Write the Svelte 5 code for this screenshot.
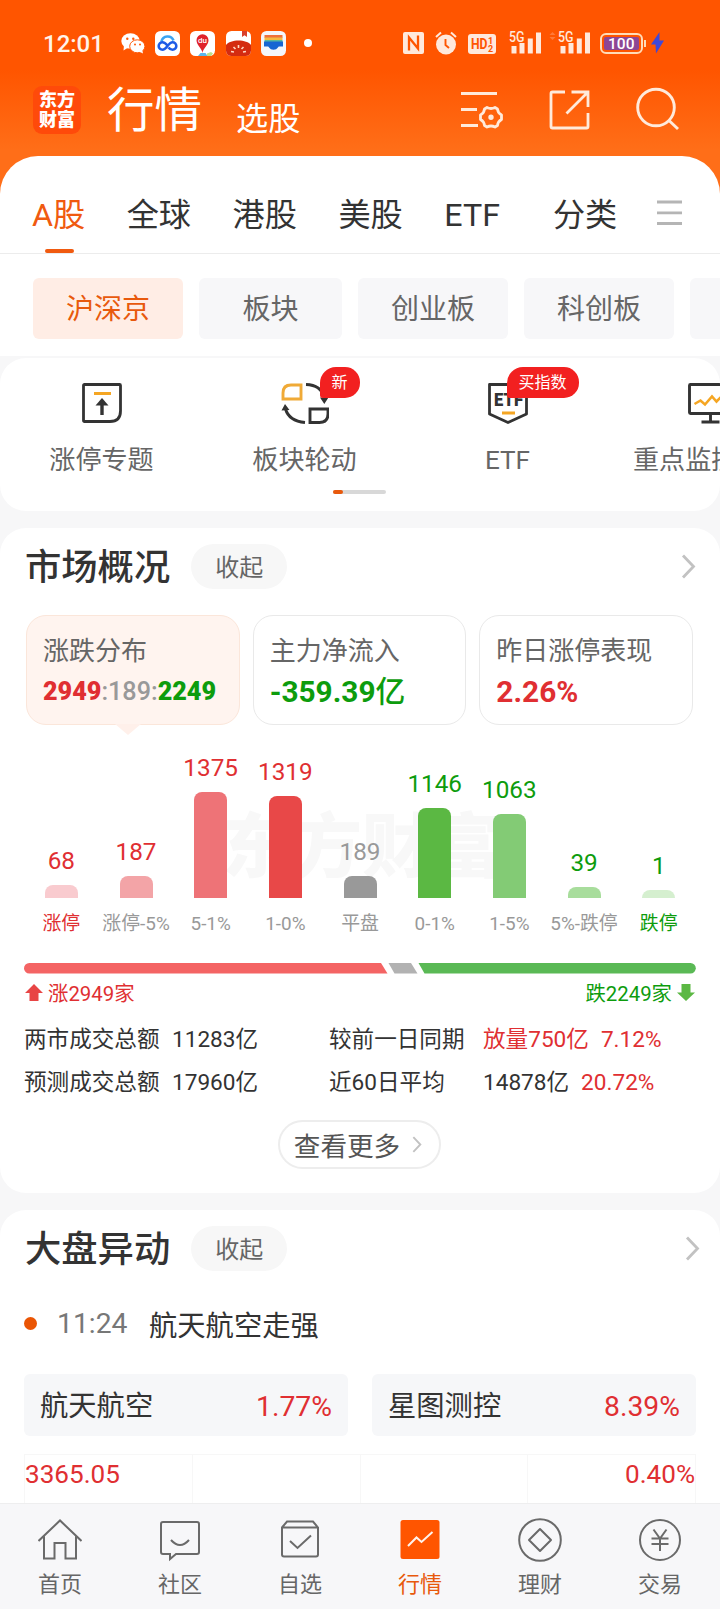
<script lang="ts">
	type Bar = { label: string; value: number; height: number; color: string; tone: string; strong?: boolean };

	const tabs: string[] = ['A股', '全球', '港股', '美股', 'ETF', '分类'];
	const boards: string[] = ['沪深京', '板块', '创业板', '科创板', ''];
	let activeTab = $state('A股');
	let activeBoard = $state('沪深京');
	let activeNav = $state('行情');

	const tools = [
		{ icon: 'limit', label: '涨停专题', badge: '' },
		{ icon: 'rotate', label: '板块轮动', badge: '新' },
		{ icon: 'etf', label: 'ETF', badge: '买指数' },
		{ icon: 'monitor', label: '重点监控', badge: '' }
	];

	// height is the drawn bar height in px
	const bars: Bar[] = [
		{ label: '涨停', value: 68, height: 13, color: '#f9cbcf', tone: 'up', strong: true },
		{ label: '涨停-5%', value: 187, height: 22, color: '#f3a4a7', tone: 'up' },
		{ label: '5-1%', value: 1375, height: 106, color: '#ee7377', tone: 'up' },
		{ label: '1-0%', value: 1319, height: 102, color: '#e84848', tone: 'up' },
		{ label: '平盘', value: 189, height: 22, color: '#999999', tone: 'flat' },
		{ label: '0-1%', value: 1146, height: 90, color: '#5bb843', tone: 'down' },
		{ label: '1-5%', value: 1063, height: 84, color: '#83cb75', tone: 'down' },
		{ label: '5%-跌停', value: 39, height: 11, color: '#a8dd9c', tone: 'down' },
		{ label: '跌停', value: 1, height: 8, color: '#d5efcf', tone: 'down', strong: true }
	];

	const movers = [
		{ name: '航天航空', change: '1.77%' },
		{ name: '星图测控', change: '8.39%' }
	];

	const navItems: string[] = ['首页', '社区', '自选', '行情', '理财', '交易'];
</script>

{#snippet chevron(w: number, h: number)}
	<svg class="chevron" width={w} height={h} viewBox="0 0 15 25">
		<path d="M2 1.500 L12.500 12.500 L2 23.500" fill="none" stroke="#c2c2c2" stroke-width="2.800" />
	</svg>
{/snippet}

{#snippet signal()}
	<svg width="32" height="24" viewBox="0 0 32 24">
		<text x="0" y="10.500" font-size="14" font-weight="500" fill="#ffe9dc" textLength="15.500" lengthAdjust="spacingAndGlyphs">5G</text>
		<path d="M2.500 15h5v7.500h-5zM10.500 12h5v10.500h-5zM18.800 7.500h5v15h-5zM27 1.500h5v21h-5z" fill="#ffe9dc" />
	</svg>
{/snippet}

<div class="page">
	<div class="top">
		<div class="status">
			<span class="time">12:01</span>
			<svg class="wechat" width="24" height="21" viewBox="0 0 24 21">
				<ellipse cx="9.500" cy="8" rx="9.200" ry="7.700" fill="#fff" />
				<path d="M3 12 L2.500 17.500 L8 14z" fill="#fff" />
				<ellipse cx="16.300" cy="13.300" rx="7.600" ry="6.500" fill="#fff" stroke="#ff5a08" stroke-width="1" />
				<path d="M18 18.500 L22 20.500 L21 16z" fill="#fff" />
				<g fill="#ff5a08">
					<circle cx="6.300" cy="5.800" r="1.200" /><circle cx="12.300" cy="5.800" r="1.200" />
					<circle cx="14" cy="11.500" r="1" /><circle cx="19" cy="11.500" r="1" />
				</g>
			</svg>
			<svg class="app-icon" width="25" height="25" viewBox="0 0 25 25">
				<rect width="25" height="25" rx="5.500" fill="#fff" />
				<path d="M6.500 10.500a6.300 6.300 0 0 1 12-1" fill="none" stroke="#3ba4f2" stroke-width="2.600" />
				<path d="M12.500 14.500c-2-2.500-3.500-3.300-5-3.300a3.800 3.800 0 0 0 0 7.600c4 0 6-7.600 10-7.600a3.800 3.800 0 0 1 0 7.600c-1.500 0-3-1-4-2.300" fill="none" stroke="#1e5be6" stroke-width="2.600" />
			</svg>
			<svg class="app-icon" width="25" height="25" viewBox="0 0 25 25">
				<rect width="25" height="25" rx="5.500" fill="#fff" />
				<path d="M8 25l2.500-3h5l2 3z" fill="#5bb7ea" />
				<path d="M17 22.500l4-1.500 2 1.500-2 2.500h-4z" fill="#bfe08a" />
				<path d="M12.500 22c-.5-5-6-7.500-6-12.800a6 6 0 0 1 12 0c0 5.300-5.500 7.800-6 12.800z" fill="#e0222b" />
				<text x="12.500" y="12" font-size="8" font-weight="500" fill="#fff" text-anchor="middle">du</text>
			</svg>
			<svg class="app-icon" width="25" height="25" viewBox="0 0 25 25">
				<rect y="0" width="25" height="25" rx="5.500" fill="#fff" />
				<path d="M16 0h5v6l-2.500-1.800L16 6z" fill="#d9402c" />
				<path d="M0 14C4 8 21 8 25 14v5.500a5.500 5.500 0 0 1-5.500 5.500h-14A5.500 5.500 0 0 1 0 19.500z" fill="#d42b10" />
				<path d="M5 20.500l3 .5M7.500 16l2 2M12.500 14v3M17.500 16l-2 2M20 20.500l-3 .5" stroke="#ffd9c4" stroke-width="1.600" />
			</svg>
			<svg class="app-icon" width="25" height="25" viewBox="0 0 25 25">
				<rect width="25" height="25" rx="5.500" fill="#f4f6fb" />
				<path d="M3.500 4h18v3h-18z" fill="#f0703a" />
				<path d="M3.500 6.500h18V9h-18z" fill="#f4b942" />
				<path d="M3.500 9h18v2h-18z" fill="#56b7a0" />
				<path d="M3 10.500h19v5h-3.500c-.8 0-1.300.5-1.800 1.300-.9 1.300-2 1.900-4.200 1.900s-3.300-.6-4.200-1.900c-.5-.8-1-1.300-1.800-1.300H3z" fill="#1765d2" />
			</svg>
			<span class="dot"></span>

			<svg class="nfc" width="21" height="22" viewBox="0 0 21 22">
				<path d="M2 0h17q2 0 2 2v18q0 2-2 2H2q-2 0-2-2V2q0-2 2-2z" fill="#ffe9dc" />
				<path d="M6 18.500V5.500l9 11V3.500" fill="none" stroke="#ff5500" stroke-width="2.300" />
			</svg>
			<svg class="alarm" width="22" height="24" viewBox="0 0 22 24">
				<circle cx="11" cy="13.500" r="10" fill="#ffe9dc" />
				<path d="M1 6l5-4.500M21 6l-5-4.500" stroke="#ffe9dc" stroke-width="2" />
				<path d="M10.500 8v6l3.500 3" fill="none" stroke="#ff5500" stroke-width="1.900" />
			</svg>
			<svg class="hd" width="28" height="20" viewBox="0 0 28 20">
				<rect width="28" height="20" rx="3" fill="#ffe9dc" />
				<text x="3" y="15" font-size="14.500" font-weight="700" fill="#ff5500" textLength="16.500" lengthAdjust="spacingAndGlyphs">HD</text>
				<text x="20" y="9.500" font-size="9" font-weight="700" fill="#ff5500">1</text>
				<text x="20" y="18" font-size="9" font-weight="700" fill="#ff5500">2</text>
			</svg>
			<span class="sig1">{@render signal()}</span>
			<svg class="updown" width="7" height="10" viewBox="0 0 7 10">
				<path d="M.5 4L3.500 1l3 3zM.5 6l3 3 3-3z" fill="#ff7a3a" />
			</svg>
			<span class="sig2">{@render signal()}</span>
			<span class="battery"><span>100</span></span>
			<svg class="bolt" width="15" height="22" viewBox="0 0 15 22">
				<path d="M9.500 0L1 12.500h4.500L6 21.500 14 8.500H9.500z" fill="#3f48d8" />
			</svg>
		</div>

		<header class="appbar">
			<div class="logo"><span>东方</span><span>财富</span></div>
			<span class="title">行情</span>
			<span class="subtitle">选股</span>
			<svg class="filter" width="44" height="44" viewBox="0 0 44 44" fill="none" stroke="#ffeadb" stroke-width="2.800">
				<path d="M1 6.500h36M1 22.500h16M1 38.500h17" />
				<path d="M27 20.500q4 2 8 0l2.500 1.500q.3 4 4 6v4.500q-3.700 2-4 6L35 40q-4-2-8 0l-2.500-1.500q-.3-4-4-6V28q3.700-2 4-6z" stroke-linejoin="round" />
				<circle cx="31" cy="30.300" r="1.300" />
			</svg>
			<svg class="share" width="42" height="42" viewBox="0 0 42 42" fill="none" stroke="#ffeadb" stroke-width="2.800">
				<path d="M16 3H3.500Q2 3 2 4.500V37.500Q2 39 3.500 39H37.500Q39 39 39 37.500V24M22.500 3H39V18M38.500 3.500L17.500 24.500" />
			</svg>
			<svg class="search" width="44" height="44" viewBox="0 0 44 44" fill="none" stroke="#ffeadb" stroke-width="2.900">
				<circle cx="20" cy="20.500" r="18.300" />
				<path d="M33 33.500L42 42" />
			</svg>
		</header>

		<div class="panel">
			<nav class="tabs">
				{#each tabs as tab (tab)}
					<button class="tab" class:active={activeTab === tab} onclick={() => (activeTab = tab)}>{tab}</button>
				{/each}
				<svg class="menu" width="25" height="26" viewBox="0 0 25 26">
					<path d="M0 2h25M0 12.800h25M0 23.500h25" stroke="#b5b5b5" stroke-width="2.800" />
				</svg>
			</nav>
			<div class="boards">
				{#each boards as board}
					<button class="board" class:active={activeBoard === board} class:short={board.length < 3} onclick={() => (activeBoard = board)}>{board}</button>
				{/each}
			</div>
		</div>
	</div>

	<section class="card tools">
		<div class="tool-row">
			{#each tools as tool}
				<div class="tool">
					<div class="tool-icon">
						{#if tool.icon === 'limit'}
							<svg width="40" height="40" viewBox="0 0 40 40" fill="none" stroke="#333" stroke-width="2.800">
								<path d="M2.500 1.500H37.500Q38.500 1.500 38.500 2.500V28Q38.500 38.500 28 38.500H2.500Q1.500 38.500 1.500 37.500V2.500Q1.500 1.500 2.500 1.500z" />
								<path d="M12 10.500h17" stroke="#f5a623" />
								<path d="M20 32V20" stroke-width="3.400" />
								<path d="M13.500 22.500L20 15l6.500 7.500z" fill="#333" stroke="none" />
							</svg>
						{:else if tool.icon === 'rotate'}
							<svg width="48" height="42" viewBox="0 0 48 42" fill="none" stroke="#333" stroke-width="2.900">
								<path d="M2 16V10Q2 2 10 2H20V16z" stroke="#f0aa37" />
								<path d="M29 26H47V31Q47 39.500 38.500 39.500H29z" />
								<path d="M25 1.500Q40 2 43 14M24 39.500Q8 38 4.500 26" />
								<path d="M.5 27.500L4 21l4.500 6zM39 14.500h8.500l-4.200 6.500z" fill="#333" stroke="none" />
							</svg>
						{:else if tool.icon === 'etf'}
							<svg width="40" height="42" viewBox="0 0 40 42" fill="none" stroke="#333" stroke-width="2.800">
								<path d="M1.500 1.500H38.500V31L20 39.500 1.500 31z" stroke-linejoin="round" />
								<text x="6" y="23" font-size="18" font-weight="900" fill="#333" stroke="none" textLength="29" lengthAdjust="spacingAndGlyphs">ETF</text>
								<path d="M14 30h13" stroke="#f5a623" />
							</svg>
						{:else}
							<svg width="46" height="41" viewBox="0 0 46 41" fill="none" stroke="#333" stroke-width="2.900">
								<path d="M2.500 1.500H43.500V30.500H2.500Q1.500 30.500 1.500 29.500V2.500Q1.500 1.500 2.500 1.500z" />
								<path d="M22.500 30v9M13.500 39h18" />
								<path d="M6.500 21l6-3.500 4.500 4 7-8 4.500 5 6-6 4 2" stroke="#f5a623" stroke-width="2.600" />
							</svg>
						{/if}
						{#if tool.badge}
							<span class="badge {tool.icon}">{tool.badge}</span>
						{/if}
					</div>
					<span class="tool-label" class:cut={tool.icon === 'monitor'}>{tool.label}</span>
				</div>
			{/each}
		</div>
		<div class="pager"><span></span></div>
	</section>

	<section class="card overview">
		<div class="head">
			<h2>市场概况</h2>
			<span class="fold">收起</span>
			{@render chevron(15, 25)}
		</div>

		<div class="stats">
			<div class="stat selected">
				<span class="stat-label">涨跌分布</span>
				<span class="stat-value small"><b class="red">2949</b><i>:189:</i><b class="green">2249</b></span>
			</div>
			<div class="stat">
				<span class="stat-label">主力净流入</span>
				<span class="stat-value green">-359.39<em>亿</em></span>
			</div>
			<div class="stat">
				<span class="stat-label">昨日涨停表现</span>
				<span class="stat-value red">2.26%</span>
			</div>
		</div>

		<div class="chart">
			<span class="watermark">东方财富</span>
			{#each bars as bar}
				<div class="col {bar.tone}">
					<span class="num">{bar.value}</span>
					<div class="bar" style="height: {bar.height}px; background: {bar.color}"></div>
					<span class="range" class:strong={bar.strong}>{bar.label}</span>
				</div>
			{/each}
		</div>

		<svg class="ratio" width="672" height="11" viewBox="0 0 672 11">
			<path d="M5.300 0H357L363.500 10.600H5.300A5.300 5.300 0 0 1 5.300 0z" fill="#f46464" />
			<path d="M364.500 0H387L393.500 10.600H370.500z" fill="#b2b2b2" />
			<path d="M394.500 0H666.500A5.300 5.300 0 0 1 666.500 10.600H400.500z" fill="#5ab955" />
		</svg>
		<div class="legend">
			<svg width="18" height="17" viewBox="0 0 18 17"><path d="M9 0L18 9H13.500V17H4.500V9H0z" fill="#e84545" /></svg>
			<span class="red">涨2949家</span>
			<span class="green right">跌2249家</span>
			<svg width="18" height="17" viewBox="0 0 18 17"><path d="M9 17L18 8.500H13.500V0H4.500V8.500H0z" fill="#5bb843" /></svg>
		</div>

		<div class="totals">
			<div class="total-row">
				<span class="c1">两市成交总额</span><span class="c2">11283亿</span>
				<span class="c3">较前一日同期</span><span class="red">放量750亿</span><span class="red pct">7.12%</span>
			</div>
			<div class="total-row">
				<span class="c1">预测成交总额</span><span class="c2">17960亿</span>
				<span class="c3">近60日平均</span><span>14878亿</span><span class="red pct">20.72%</span>
			</div>
		</div>

		<button class="more">查看更多 {@render chevron(10, 17)}</button>
	</section>

	<section class="card moves">
		<div class="head">
			<h2>大盘异动</h2>
			<span class="fold">收起</span>
			{@render chevron(15, 25)}
		</div>
		<div class="event">
			<span class="event-dot"></span>
			<span class="event-time">11:24</span>
			<span>航天航空走强</span>
		</div>
		<div class="movers">
			{#each movers as mover}
				<div class="mover"><span>{mover.name}</span><span class="red">{mover.change}</span></div>
			{/each}
		</div>
		<div class="grid">
			<div class="cell"><span class="red">3365.05</span></div>
			<div class="cell"></div>
			<div class="cell"></div>
			<div class="cell last"><span class="red">0.40%</span></div>
		</div>
	</section>

	<nav class="bottom">
		{#each navItems as item (item)}
			<button class="nav-item" class:active={activeNav === item} onclick={() => (activeNav = item)}>
				<svg width="44" height="44" viewBox="0 0 44 44" fill="none" stroke="#6a6a6a" stroke-width="2">
					{#if item === '首页'}
						<path d="M.5 23L22 2.500 43.500 23M6 18.500V40.500H16.500V25H27.500V40.500H38V18.500" />
					{:else if item === '社区'}
						<path d="M5 4H39Q41 4 41 6V34Q41 36 39 36H18L12 41V36H5Q3 36 3 34V6Q3 4 5 4z" />
						<path d="M13 22Q22 32 31 22" />
					{:else if item === '自选'}
						<path d="M4 9.500L9 3.500H35L40 9.500V36.500Q40 38.500 38 38.500H6Q4 38.500 4 36.500zM4 9.500H40" />
						<path d="M12 23l7.500 7L33 17.500" />
					{:else if item === '行情'}
						<rect x="2.500" y="2" width="39" height="39" rx="2.500" fill="#ff5500" stroke="none" />
						<path d="M10 28l8.500-8.500 5 4.500L34.500 14" stroke="#fff3ec" />
					{:else if item === '理财'}
						<circle cx="22" cy="22" r="20.800" />
						<path d="M22 11L33 22 22 33 11 22z" stroke-linejoin="round" />
					{:else}
						<circle cx="22" cy="22" r="20" />
						<path d="M15.500 11.500L22 20.500 28.500 11.500M13.500 20.500H30.500M13.500 26H30.500M22 20.500V33" />
					{/if}
				</svg>
				<span>{item}</span>
			</button>
		{/each}
	</nav>
</div>

<style>
	:global(body) {
		margin: 0;
	}

	.page {
		width: 720px;
		height: 1609px;
		overflow: hidden;
		display: flex;
		flex-direction: column;
		background: #f7f7f8;
		font-family: Roboto, 'Noto Sans CJK SC', sans-serif;
		color: #333;
	}

	.page * {
		box-sizing: border-box;
	}

	svg {
		display: block;
		flex: none;
	}

	button {
		border: none;
		background: none;
		padding: 0;
		font: inherit;
		color: inherit;
		white-space: nowrap;
	}

	span {
		white-space: nowrap;
	}

	.red {
		color: #e02f32;
	}

	.green {
		color: #0d9c0d;
	}

	/* orange header */
	.top {
		background: linear-gradient(#ff5500 0, #ff5500 70px, #ff6e18 150px, #ff6e18 100%);
		flex: none;
	}

	.status {
		display: flex;
		align-items: center;
		height: 86px;
		padding-left: 43px;
	}

	.time {
		width: 78px;
		padding-top: 1px;
		font-size: 24px;
		font-weight: 500;
		line-height: 28px;
		color: #fff3ea;
	}

	.app-icon {
		margin-left: 10.200px;
	}

	.dot {
		width: 8px;
		height: 8px;
		margin-left: 18px;
		border-radius: 50%;
		background: #fff;
	}

	.nfc {
		margin-left: 91px;
	}

	.alarm {
		margin-left: 11px;
	}

	.hd {
		margin: 2px 0 0 11px;
	}

	.sig1 {
		margin-left: 13px;
	}

	.updown {
		margin: -14px 0 0 8px;
	}

	.sig2 {
		margin-left: 2px;
	}

	.battery {
		position: relative;
		display: flex;
		width: 43px;
		height: 21px;
		margin-left: 10px;
		padding: 2px;
		border: 2px solid #ffdcb8;
		border-radius: 6px;
	}

	.battery::after {
		content: '';
		position: absolute;
		top: 5px;
		right: -5px;
		width: 2px;
		height: 7px;
		background: #ffdcb8;
	}

	.battery span {
		flex: 1;
		border-radius: 2px;
		background: #8d4694;
		color: #fff;
		font-size: 15.500px;
		font-weight: 500;
		line-height: 14px;
		text-align: center;
	}

	.bolt {
		margin-left: 7px;
	}

	.appbar {
		display: flex;
		align-items: flex-start;
		height: 70px;
		padding-left: 33px;
		color: #fff;
	}

	.logo {
		display: flex;
		flex-direction: column;
		justify-content: center;
		width: 48px;
		height: 48px;
		border-radius: 9px;
		background: #ff4a0a;
		font-size: 18px;
		font-weight: 900;
		line-height: 20px;
		text-align: center;
	}

	.title {
		margin: -3px 0 0 26px;
		font-size: 47.500px;
		line-height: 56px;
	}

	.subtitle {
		margin: 13px 0 0 34px;
		font-size: 32.200px;
		line-height: 40px;
	}

	.filter {
		margin: 1px 0 0 160px;
	}

	.share {
		margin: 3px 0 0 45px;
	}

	.search {
		margin: 1px 0 0 45px;
	}

	.panel {
		height: 200px;
		border-radius: 38px 38px 0 0;
		background: #fff;
		overflow: hidden;
	}

	.tabs {
		display: flex;
		align-items: center;
		height: 98px;
		padding: 20px 0 0 32px;
		border-bottom: 1px solid #ececec;
	}

	.tab {
		position: relative;
		margin-right: 41.500px;
		font-size: 32.200px;
		line-height: 40px;
	}

	.tab:nth-child(5) {
		margin-right: 53px;
	}

	.tab:nth-child(6) {
		margin-right: 40px;
	}

	.tab.active {
		color: #f05a10;
	}

	.tab.active::after {
		content: '';
		position: absolute;
		left: 13px;
		bottom: -18px;
		width: 29px;
		height: 4px;
		border-radius: 2px;
		background: #f05a10;
	}

	.menu {
		margin-top: -3px;
	}

	.boards {
		display: flex;
		gap: 16px;
		padding: 24px 0 0 33px;
	}

	.board {
		flex: none;
		width: 150px;
		height: 61px;
		padding-top: 2px;
		border-radius: 6px;
		background: #f7f7f9;
		color: #666;
		font-size: 28px;
		line-height: 59px;
	}

	.board.short {
		width: 143px;
	}

	.board.active {
		background: #ffede5;
		color: #e8590c;
	}

	/* cards */
	.card {
		flex: none;
		border-radius: 26px;
		background: #fff;
	}

	.tools {
		height: 153px;
		margin-top: 2px;
		overflow: hidden;
	}

	.tool-row {
		display: flex;
		width: 814px;
		padding-top: 25px;
	}

	.tool {
		display: flex;
		flex-direction: column;
		align-items: center;
		width: 203px;
	}

	.tool-icon {
		position: relative;
		height: 59px;
	}

	.badge {
		position: absolute;
		left: 19px;
		top: -16px;
		height: 31px;
		padding: 0 12px;
		border-radius: 16px 15px 15px 3px;
		background: #f22020;
		color: #fff;
		font-size: 16px;
		line-height: 32px;
	}

	.badge.rotate {
		left: 39px;
	}

	.tool-label {
		color: #666;
		font-size: 26.100px;
		line-height: 36px;
	}

	.tool-label.cut {
		width: 155px;
	}

	.pager {
		width: 53px;
		height: 4px;
		margin: 12px 0 0 333px;
		border-radius: 2px;
		background: #d8d8d8;
	}

	.pager span {
		display: block;
		width: 10px;
		height: 4px;
		border-radius: 2px;
		background: #e8590c;
	}

	.overview {
		display: flex;
		flex-direction: column;
		height: 665px;
		margin-top: 17px;
		padding: 0 24px;
	}

	.head {
		display: flex;
		align-items: center;
		height: 77px;
	}

	h2 {
		margin: 3px 0 0 1px;
		font-size: 36.300px;
		font-weight: 500;
		line-height: 44px;
		white-space: nowrap;
	}

	.fold {
		margin-left: 21px;
		width: 96px;
		height: 45px;
		padding-top: 1px;
		border-radius: 23px;
		background: #f7f7f7;
		color: #666;
		font-size: 24px;
		line-height: 46px;
		text-align: center;
	}

	.head .chevron {
		margin-left: auto;
	}

	.stats {
		display: flex;
		gap: 13px;
		padding: 10px 3px 0 2px;
	}

	.stat {
		position: relative;
		display: flex;
		flex-direction: column;
		flex: 1;
		height: 110px;
		padding: 17px 0 0 16px;
		border: 1.500px solid #e9e9e9;
		border-radius: 20px;
	}

	.stat.selected {
		border-color: #fbe6da;
		background: #fff4ef;
	}

	.stat.selected::after {
		content: '';
		position: absolute;
		left: 88px;
		bottom: -11px;
		border: 13px solid transparent;
		border-top: 11px solid #fff0ea;
		border-bottom: none;
	}

	.stat-label {
		color: #666;
		font-size: 26px;
		line-height: 36px;
	}

	.stat-value {
		font-size: 29.800px;
		font-weight: 700;
		line-height: 46px;
	}

	.stat-value em {
		font-style: normal;
		font-weight: 500;
	}

	.stat-value.small {
		font-size: 25.200px;
	}

	.stat-value i {
		color: #999;
		font-style: normal;
		font-weight: 500;
	}

	.chart {
		position: relative;
		display: flex;
		align-items: flex-end;
		height: 214px;
	}

	.watermark {
		position: absolute;
		left: 198px;
		top: 78px;
		color: #f8f8f8;
		font-size: 70px;
		font-weight: 900;
		line-height: 90px;
	}

	.col {
		position: relative;
		display: flex;
		flex: 1;
		flex-direction: column;
		align-items: center;
	}

	.num {
		margin-bottom: 9px;
		font-size: 24.300px;
		line-height: 30px;
	}

	.bar {
		width: 33px;
		border-radius: 8px 8px 0 0;
	}

	.range {
		height: 30px;
		margin: 11px 0 0;
		color: #999;
		font-size: 18.900px;
		line-height: 30px;
	}

	.up .num,
	.up .strong {
		color: #e02f32;
	}

	.flat .num {
		color: #999;
	}

	.down .num,
	.down .strong {
		color: #0d9c0d;
	}

	.ratio {
		margin-top: 24px;
	}

	.legend {
		display: flex;
		align-items: center;
		height: 36px;
		padding: 0 1px;
		font-size: 20.400px;
		gap: 5px;
	}

	.right {
		margin-left: auto;
	}

	.totals {
		margin-top: 8px;
	}

	.total-row {
		display: flex;
		height: 43px;
		font-size: 22.600px;
		line-height: 43px;
	}

	.c1 {
		width: 148px;
	}

	.c2 {
		width: 157px;
	}

	.c3 {
		width: 154px;
	}

	.pct {
		margin-left: 12px;
	}

	.more {
		display: flex;
		align-items: center;
		align-self: center;
		justify-content: center;
		gap: 12px;
		width: 163px;
		height: 49px;
		margin-top: 16px;
		margin-right: 1px;
		padding-right: 3px;
		border: 2px solid #ededed;
		border-radius: 25px;
		color: #555;
		font-size: 26.600px;
	}

	.moves {
		height: 320px;
		margin-top: 17px;
		padding: 0 24px;
		border-radius: 26px 26px 0 0;
	}

	.moves .head {
		margin-right: -4px;
	}

	.event {
		display: flex;
		align-items: center;
		height: 72px;
		font-size: 28.300px;
	}

	.event-dot {
		width: 13px;
		height: 13px;
		margin-right: 20px;
		border-radius: 50%;
		background: #ea5504;
	}

	.event-time {
		width: 92px;
		color: #777;
	}

	.movers {
		display: flex;
		gap: 24px;
		margin-top: 15px;
	}

	.mover {
		display: flex;
		flex: 1;
		justify-content: space-between;
		height: 62px;
		padding: 2px 16px 0;
		border-radius: 6px;
		background: #f6f7f9;
		font-size: 28.300px;
		line-height: 62px;
	}

	.grid {
		display: flex;
		height: 60px;
		margin-top: 18px;
		border: 1px solid #f7f7f7;
		border-width: 1px 0 0 1px;
	}

	.cell {
		flex: 1;
		border-right: 1px solid #f7f7f7;
		font-size: 26.100px;
		line-height: 39px;
	}

	.cell.last {
		text-align: right;
	}

	/* bottom navigation */
	.bottom {
		position: relative;
		display: flex;
		flex: none;
		height: 107px;
		margin-top: -27px;
		border-top: 1px solid #eeeeef;
		background: #f7f7f9;
	}

	.nav-item {
		display: flex;
		flex: 1;
		flex-direction: column;
		align-items: center;
		padding-top: 14px;
		color: #666;
		font-size: 22px;
		line-height: 30px;
	}

	.nav-item span {
		margin-top: 8px;
	}

	.nav-item.active {
		color: #e8590c;
	}
</style>
